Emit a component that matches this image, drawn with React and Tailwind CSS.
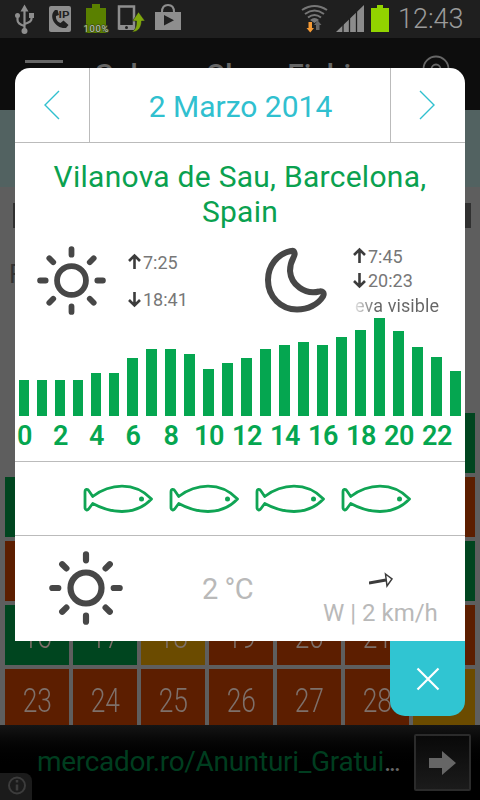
import React from 'react';

const hours = [36, 36, 36, 36, 43, 43, 58, 67, 67, 62, 47, 53, 58, 67, 71, 74, 71, 79, 86, 98, 85, 69, 59, 45];

const dayColors = {
    good: 'bg-[#00451f]',
    bad: 'bg-[#5c1e00]',
    fair: 'bg-[#6b4b00]'
};

const weeks = [
    [null, null, null, null, null, null, [1, 'good']],
    [[2, 'good'], [3, 'bad'], [4, 'bad'], [5, 'bad'], [6, 'bad'], [7, 'bad'], [8, 'bad']],
    [[9, 'bad'], [10, 'bad'], [11, 'bad'], [12, 'bad'], [13, 'bad'], [14, 'bad'], [15, 'good']],
    [[16, 'good'], [17, 'good'], [18, 'fair'], [19, 'bad'], [20, 'bad'], [21, 'bad'], [22, 'bad']],
    [[23, 'bad'], [24, 'bad'], [25, 'bad'], [26, 'bad'], [27, 'bad'], [28, 'bad'], [29, 'fair']]
];

const StatusBar = () => (
    <div className="h-[38px] bg-[#1f1f1f] flex items-center shrink-0">
        <svg width="190" height="38" viewBox="0 0 190 38" fill="none">
            <g stroke="#8e8e8e" strokeWidth="2.200">
                <path d="M24.500 10v21M17.500 16v4q0 4 7 6M31.500 16v3q0 3-7 5" />
            </g>
            <g fill="#8e8e8e">
                <path d="M24.500 4.500l4 7h-8zM29 13h5v5h-5z" />
                <circle cx="17.500" cy="15.500" r="2.500" />
                <circle cx="24.500" cy="31" r="3" />
                <rect x="49" y="6" width="22" height="26" rx="2" />
                <path d="M155 12h26v18h-26z" />
            </g>
            <path d="M55 10c-7 6 0 19 11 18l2.500-3-5-4.500-3 2.500c-3-1-5-4-4.500-7l3-1-1.500-5z" fill="#202020" />
            <text x="58.500" y="18" fontSize="9.500" fontWeight="700" textLength="11" lengthAdjust="spacingAndGlyphs" fill="#202020" fontFamily="Roboto, sans-serif">IP</text>
            <path d="M86 8h6V4h8v4h6v25H86z" fill="#5a8000" />
            <text x="83.500" y="32" fontSize="9.500" textLength="25" fill="#c4c4c4" stroke="#3d5213" strokeWidth="1.500" paintOrder="stroke" fontFamily="Roboto, sans-serif">100%</text>
            <path d="M119 6.500h15v22h-15z" stroke="#8e8e8e" strokeWidth="2.500" />
            <path d="M119 25h15v5h-15z" fill="#8e8e8e" />
            <circle cx="126.500" cy="27.500" r="1.500" fill="#202020" />
            <path d="M138.500 12l6.500 9h-3.500c0 6-3 11-9.500 11 4-3 4.500-6 4.500-11h-4z" fill="#7fa70c" stroke="#202020" strokeWidth=".5" />
            <path d="M162 12q0-7 6-7t6 7" stroke="#8e8e8e" strokeWidth="2" />
            <path d="M164 15v10.500l10-5.250z" fill="#202020" />
        </svg>
        <svg width="208" height="38" viewBox="190 0 208 38" fill="none">
            <g stroke="#777" strokeWidth="2">
                <path d="M302 10q12.500-8 25 0M305 14q9.500-7 19 0M308 17.500q6.500-5 13 0" />
            </g>
            <path d="M310 20q4.500-4 9 0l-4.500 3z" fill="#777" />
            <path d="M308.500 22h3.500v6h2l-3.750 4.500-3.750-4.500h2z" fill="#f59a35" />
            <path d="M316 30v-5h-2l3.750-4.500 3.750 4.500h-2v5z" fill="#666" />
            <path d="M336 32L364 5v27z" fill="#8c8c8c" />
            <path d="M343 20v12M349.500 14v18M356.500 9v23" stroke="#1f1f1f" strokeWidth="1.300" />
            <path d="M371 8h6V5h6v3h6v24h-18z" fill="#92d400" />
        </svg>
        <span className="text-[27px] font-light text-[#9a9a9a] leading-none">12:43</span>
    </div>
);

const AppBar = () => (
    <div className="h-[72px] bg-[#0d0d0d] shrink-0 flex pl-[25px] pr-[30px]">
        <div className="w-[38px] h-[3px] bg-[#666] mt-[22px]" />
        <span className="ml-8 mt-[14px] flex-1 text-[30px] font-medium text-[#666] whitespace-nowrap">Solunar Class Fishing</span>
        <svg className="mt-[17px]" width="28" height="28" viewBox="0 0 28 28" fill="none" stroke="#666" strokeWidth="1.800">
            <circle cx="14" cy="14" r="12.500" />
            <circle cx="14" cy="14" r="4.500" />
        </svg>
    </div>
);

const Calendar = () => (
    <div className="flex flex-col gap-1 pl-[5px] pr-[5px] h-[312px] overflow-hidden">
        {weeks.map((week, i) => (
            <div key={i} className="flex gap-1 h-[60px] shrink-0">
                {week.map((day, j) => (
                    <div key={j} className={`w-16 last:w-[62px] shrink-0 flex justify-center pt-3 ${day ? dayColors[day[1]] : ''}`}>
                        {day && <span className="text-[33px] leading-[40px] font-light text-[#7e706a] scale-x-[0.8]">{day[0]}</span>}
                    </div>
                ))}
            </div>
        ))}
    </div>
);

const AdBanner = () => (
    <div className="h-[75px] shrink-0 bg-linear-to-b from-[#151515] to-black to-60% flex relative">
        <span className="ml-[37px] mt-[17px] w-[377px] text-[28px] leading-[40px] text-[#003d1f] whitespace-nowrap tracking-[-0.3px]">
            mercador.ro/Anunturi_Gratui<span className="text-[#666] tracking-[-2.500px]">...</span>
        </span>
        <div className="mt-[9px] w-[57px] h-[57px] border-2 border-[#2b2b2b] rounded-[2px] bg-linear-to-b from-[#090909] to-[#1b1b1b] flex items-center justify-center">
            <svg width="27" height="24" viewBox="0 0 27 24" fill="#666"><path d="M0 7h13V0l14 12-14 12v-7H0z" /></svg>
        </div>
        <div className="absolute left-0 bottom-0 w-8 h-[27px] bg-[#1b1b1b] rounded-tr-lg">
            <svg width="32" height="27" viewBox="0 0 32 27" fill="none" stroke="#3c3c3c" strokeWidth="2">
                <circle cx="17" cy="12.500" r="8" />
                <path d="M17 7v2.500M17 11.500v6" strokeWidth="2.500" />
            </svg>
        </div>
    </div>
);

const Sun = ({ size }) => (
    <svg width={size} height={size} viewBox="0 0 74 74" fill="none" stroke="#474747" strokeWidth="6.200" strokeLinecap="round">
        <circle cx="37" cy="37" r="15.500" />
        <path d="M37 3.300v6M37 64.700v6M3.300 37h6M64.700 37h6M13.200 13.200l4.200 4.200M56.600 56.600l4.200 4.200M13.200 60.800l4.200-4.200M56.600 17.400l4.200-4.200" />
    </svg>
);

const Moon = () => (
    <svg width="64" height="68" viewBox="0 0 64 68" fill="none" stroke="#474747" strokeWidth="6" strokeLinejoin="round">
        <path d="M27 5C13 8 4 20 4 34c0 17 13 29.500 29 29.500 11 0 21-5 26-13 2-4-1-6-4-5C41 49 27 39 26 25c0-6 1-9 3.500-13.500C32 7 30 4 27 5z" />
    </svg>
);

const Time = ({ down, children }) => (
    <div className="flex items-center h-6">
        <svg className={down ? '' : '-mt-1'} width="13" height="16" viewBox="0 0 13 16" fill="none" stroke="#3c3c3c" strokeWidth="2.600">
            <path d={down ? 'M6.500 0v14M1 8l5.500 5.500L12 8' : 'M6.500 16V2M1 8l5.500-5.500L12 8'} />
        </svg>
        <span className="ml-[2px] text-[18px] leading-6 text-[#777]">{children}</span>
    </div>
);

const Fish = () => (
    <svg width="70" height="30" viewBox="0 0 70 30" fill="none" stroke="#10a454" strokeWidth="2.800" strokeLinejoin="round">
        <path d="M9.700 12.500C19 5.500 29 2.200 39 2.200c12 0 21 4 29.500 12.800C60 24 51 27.500 39 27.500c-10 0-20-3-29.300-8L6 24.500c-1.500 2.500-4 1.500-4-1V8c0-3 2.500-3.500 4-1z" />
        <circle cx="58.500" cy="15" r="2.500" fill="#10a454" stroke="none" />
    </svg>
);

const DayDialog = () => (
    <div className="absolute left-[15px] top-[68px] w-[450px] flex flex-col items-end">
        <div className="w-full h-[573px] bg-white rounded-t-[15px] overflow-hidden flex flex-col">
            <div className="h-[75px] flex border-b border-[#bbb] shrink-0">
                <div className="w-[75px] border-r border-[#bbb] flex items-center justify-center">
                    <svg width="16" height="30" viewBox="0 0 16 30" fill="none" stroke="#30c0cf" strokeWidth="1.400"><path d="M15 1L1 15l14 14" /></svg>
                </div>
                <div className="flex-1 flex items-center justify-center text-[30px] text-[#30c0cf] pt-[2px] pl-px">2 Marzo 2014</div>
                <div className="w-[75px] border-l border-[#bbb] flex items-center justify-center pr-[3px]">
                    <svg width="16" height="30" viewBox="0 0 16 30" fill="none" stroke="#30c0cf" strokeWidth="1.400"><path d="M1 1l14 14L1 29" /></svg>
                </div>
            </div>
            <div className="pt-[16px] text-center text-[30px] leading-[35px] tracking-[0.27px] text-[#0aa14f] h-[97px] shrink-0">Vilanova de Sau, Barcelona,<br />Spain</div>
            <div className="h-[78px] shrink-0 flex">
                <div className="pl-[22px] pt-[6px] w-[113px]"><Sun size={69} /></div>
                <div className="pt-[11px] w-[136px] flex flex-col gap-[13px]">
                    <Time>7:25</Time>
                    <Time down>18:41</Time>
                </div>
                <div className="pt-[6px] w-[89px]"><Moon /></div>
                <div className="pt-[5px]">
                    <Time>7:45</Time>
                    <Time down>20:23</Time>
                    <div className="h-6 ml-[2px] pt-px text-[18px] leading-6 tracking-[0.1px] whitespace-nowrap bg-linear-to-r from-[#e4e4e4] to-[#666] to-25% bg-clip-text text-transparent">eva visible</div>
                </div>
            </div>
            <div className="h-[144px] shrink-0 flex border-b border-[#bbb]">
                {hours.map((h, i) => (
                    <div key={i} className={`shrink-0 flex flex-col items-center ${i < 6 ? 'w-[18px]' : 'w-[19px]'}`}>
                        <div className="h-[98px] flex items-end">
                            <div className={`bg-[#05a650] ${i < 6 ? 'w-[10px]' : 'w-[11px]'}`} style={{ height: h }} />
                        </div>
                        {i % 2 === 0 && <span className="pl-px text-[27px] leading-[40px] font-semibold tracking-[-0.4px] text-[#05a650]">{i}</span>}
                    </div>
                ))}
            </div>
            <div className="h-[74px] shrink-0 flex items-center gap-4 pl-[68px] border-b border-[#bbb]">
                <Fish />
                <Fish />
                <Fish />
                <Fish />
            </div>
            <div className="flex-1 flex text-[#b9b9b9]">
                <div className="w-[187px] pl-[34px] pt-[15px]"><Sun size={74} /></div>
                <div className="w-[120px] pt-[33px] text-[29px] leading-[40px] tracking-[-0.5px]">2 °C</div>
                <div className="pt-[36px]">
                    <svg className="ml-[47px]" width="26" height="16" viewBox="0 0 26 16" fill="none" stroke="#3c3c3c">
                        <path d="M0 11l17-3" strokeWidth="2.800" />
                        <path d="M16.500 2l6.500 5-5 7z" strokeWidth="1.500" />
                    </svg>
                    <div className="text-[24px] leading-[32px] mt-[9px] ml-px">W | 2 km/h</div>
                </div>
            </div>
        </div>
        <div className="w-[75px] h-[75px] bg-[#30c5d2] rounded-b-[15px] flex items-center justify-center">
            <svg width="24" height="24" viewBox="0 0 24 24" stroke="#fff" strokeWidth="2.200"><path d="M1.500 1.500l21 21M22.500 1.500l-21 21" /></svg>
        </div>
    </div>
);

const App = () => {
    return (
        <div className="relative w-[480px] h-[800px] overflow-hidden bg-[#5e5e5e] flex flex-col font-[Roboto,sans-serif]">
            <StatusBar />
            <AppBar />
            <div className="h-[77px] bg-[#526261] shrink-0" />
            <div className="h-[226px] shrink-0 pt-[16px] px-[9px]">
                <div className="h-[25px] ml-1 bg-[#303030]" />
                <div className="mt-[27px] text-[26px] text-[#333]">F</div>
            </div>
            <Calendar />
            <AdBanner />
            <DayDialog />
        </div>
    );
};

export default App;
